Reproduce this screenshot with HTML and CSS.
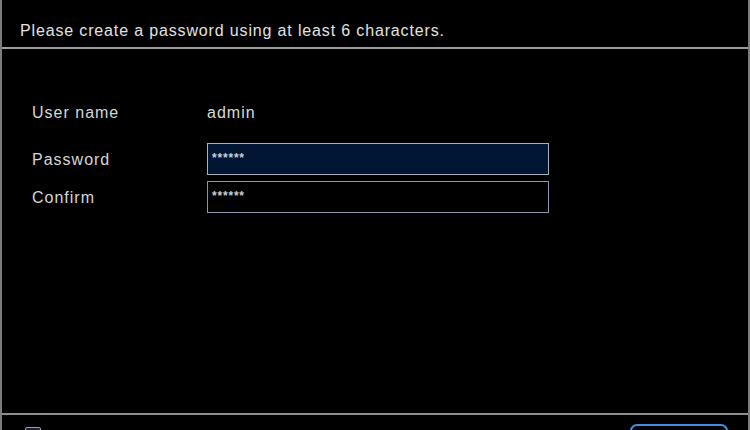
FILE: index.html
```html
<!DOCTYPE html>
<html lang="en">
<head>
<meta charset="utf-8">
<title>Create password</title>
<link rel="stylesheet" href="styles.css">
</head>
<body>
<div class="dialog">
  <div class="header">Please create a password using at least 6 characters.</div>
  <div class="main">
    <div class="form">
      <div class="row row-user">
        <div class="label">User name</div>
        <div class="value">admin</div>
      </div>
      <div class="row row-pass">
        <div class="label">Password</div>
        <div class="field active">******</div>
      </div>
      <div class="row">
        <div class="label">Confirm</div>
        <div class="field">******</div>
      </div>
    </div>
  </div>
  <div class="footer">
    <span class="check"></span>
    <span class="button"></span>
  </div>
</div>
</body>
</html>
```
FILE: styles.css
```css
html, body {
  margin: 0;
  padding: 0;
  background: #000;
}
.dialog {
  width: 750px;
  height: 430px;
  box-sizing: border-box;
  border-left: 2px solid #7c7c7c;
  border-right: 2px solid #7c7c7c;
  background: #000;
  display: flex;
  flex-direction: column;
  overflow: hidden;
  font-family: "Liberation Sans", Arial, sans-serif;
  color: #dcdcdc;
}
.header {
  height: 49px;
  box-sizing: border-box;
  padding: 21px 0 0 18px;
  font-size: 16px;
  line-height: 20px;
  letter-spacing: 0.85px;
  color: #e2e2e2;
  border-bottom: 2px solid #9c9c9c;
  flex: none;
}
.main {
  height: 366px;
  flex: none;
  border-bottom: 2px solid #8e8e8e;
  box-sizing: border-box;
}
.form {
  display: flex;
  flex-direction: column;
  padding: 47px 0 0 30px;
  font-size: 16px;
  letter-spacing: 1px;
}
.row {
  display: flex;
  align-items: center;
  height: 32px;
}
.row-user {
  margin-bottom: 15px;
}
.row-pass {
  margin-bottom: 6px;
}
.label {
  width: 175px;
  flex: none;
  line-height: 20px;
  color: #d6d6d6;
  padding-top: 2px;
}
.value {
  line-height: 20px;
  color: #d9d9d9;
  padding-top: 2px;
}
.field {
  width: 342px;
  height: 32px;
  box-sizing: border-box;
  border: 1px solid #8a96ae;
  padding: 0 0 0 4px;
  font-size: 12px;
  font-weight: bold;
  line-height: 28px;
  letter-spacing: 0.8px;
  color: #c4d0dc;
  background: #000;
}
.field.active {
  background: #011535;
  border-color: #a6b2ba;
}
.footer {
  flex: 1;
  display: flex;
  justify-content: space-between;
  align-items: flex-start;
  padding: 0 20px 0 23px;
}
.check {
  width: 14px;
  height: 14px;
  margin-top: 12px;
  border: 1px solid #9aa0aa;
  border-radius: 2px;
  background: #1a1f2a;
}
.button {
  width: 98px;
  height: 30px;
  margin-top: 9px;
  box-sizing: border-box;
  border: 2px solid #3e90e4;
  border-radius: 7px;
  background: #000;
}
```
